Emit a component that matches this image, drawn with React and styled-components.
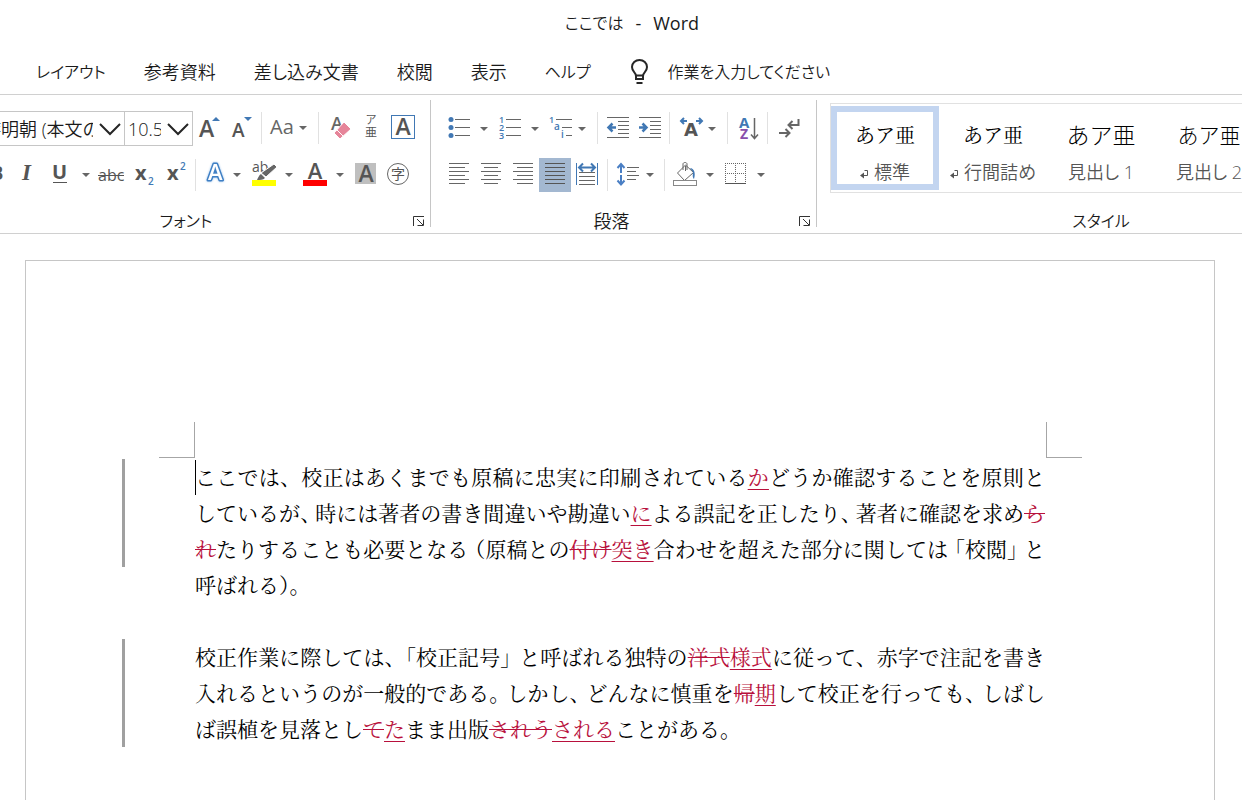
import React from "react";
import styled, { createGlobalStyle, css } from "styled-components";

const BLUE = "#4178b4";
const GREY = "#666";
const DARK = "#555";
const UI = '"Open Sans", "Noto Sans CJK JP", sans-serif';
const MINCHO = '"Noto Serif CJK JP", "Noto Serif JP", "Noto Sans CJK JP", serif';

const GlobalStyle = createGlobalStyle`
  *, *::before, *::after { box-sizing: border-box; }
  body { margin: 0; background: #fff; }
  button { padding: 0; border: 0; background: none; font: inherit; color: inherit; }
`;

const Shell = styled.div`
  display: flex;
  flex-direction: column;
  height: 100vh;
  overflow: hidden;
  background: #fff;
  color: #1a1a1a;
  font: 350 18px/24px ${UI};
  font-feature-settings: "palt" 1;
`;

const kana = css`
  font-size: ${(p) => (p.$kana ? 16 : 18)}px;
`;

const TitleBar = styled.header`
  display: flex;
  flex: none;
  justify-content: center;
  align-items: center;
  gap: 12px;
  height: 46px;
  padding-left: 22px;
`;

const TitlePart = styled.span`
  ${kana}
  font-weight: ${(p) => (p.$kana ? 350 : 400)};
`;

const TabBar = styled.nav`
  display: flex;
  flex: none;
  align-items: center;
  gap: 38px;
  height: 49px;
  padding: 4px 0 0 36px;
  border-bottom: 1px solid #d0d0d0;
`;

const Tab = styled.button`
  ${kana}
  white-space: nowrap;
`;

const TellMe = styled.button`
  ${kana}
  display: flex;
  align-items: center;
  gap: 19px;
  white-space: nowrap;
`;

const Ribbon = styled.section`
  display: flex;
  flex: none;
  height: 139px;
  overflow: hidden;
  border-bottom: 1px solid #d0d0d0;
`;

const Group = styled.div`
  display: flex;
  flex: none;
  flex-direction: column;
  width: ${(p) => p.$width}px;
  margin-left: ${(p) => p.$shift || 0}px;
  padding-top: ${(p) => p.$top || 16}px;
`;

const Divider = styled.div`
  flex: none;
  width: 1px;
  margin: 5px 0 6px;
  background: #c6c6c6;
`;

const Row = styled.div`
  display: flex;
  height: 34px;
  margin-bottom: 13px;
  padding-left: ${(p) => p.$pad || 12}px;
`;

const GroupFoot = styled.div`
  display: flex;
  align-items: center;
  height: 22px;
  margin-top: ${(p) => p.$gap || 5}px;
`;

const GroupName = styled.span`
  ${kana}
  flex: 1;
  text-align: center;
`;

const Launcher = styled.button`
  display: flex;
  width: 24px;
  height: 22px;
  align-items: center;
  padding-left: 6px;
`;

const Tool = styled.button`
  display: flex;
  flex: none;
  width: ${(p) => p.$w || 32}px;
  height: 34px;
  background: ${(p) => (p.$on ? "#a3b8d1" : "transparent")};
`;

const Sep = styled.span`
  flex: none;
  width: 1px;
  height: 32px;
  margin: 1px 3px 0 4px;
  background: #e1e1e1;
`;

const Combo = styled.label`
  position: relative;
  display: flex;
  flex: none;
  width: ${(p) => p.$w}px;
  height: 35px;
  margin-right: ${(p) => p.$join || 0}px;
  border: 1px solid #c6c6c6;

  select {
    width: 100%;
    height: 33px;
    padding: 0 31px 0 3px;
    border: 0;
    appearance: none;
    background: transparent;
    color: #1a1a1a;
    font: 350 18px/24px ${UI};
  }

  svg {
    position: absolute;
    top: 10px;
    right: 3px;
    pointer-events: none;
  }
`;

const Gallery = styled.div`
  display: flex;
  height: 90px;
  margin-left: 13px;
  padding: 2px 0;
  border: 1px solid #e1e1e1;
`;

const StyleCard = styled.button`
  display: flex;
  flex: none;
  flex-direction: column;
  align-items: center;
  width: 108px;
  height: 84px;
  padding-top: 10px;
  border: 6px solid ${(p) => (p.$on ? "#c3d5f0" : "transparent")};
`;

const Sample = styled.span`
  height: 26px;
  color: #000;
  font-family: ${(p) => (p.$head ? UI : MINCHO)};
  font-size: ${(p) => p.$size}px;
  line-height: 26px;
  font-weight: ${(p) => (p.$head ? 300 : 400)};
  font-feature-settings: normal;
  white-space: nowrap;
`;

const StyleName = styled.span`
  display: flex;
  align-items: center;
  gap: 6px;
  margin-top: 12px;
  color: ${DARK};
  white-space: nowrap;
`;

const Page = styled.main`
  flex: 1 0 auto;
  margin: 26px 27px 0 25px;
  padding-top: 161px;
  border: 1px solid #c6c6c6;
  border-bottom: 0;
`;

const Corners = styled.div`
  display: flex;
  justify-content: space-between;
  margin-bottom: 1px;
  padding: 0 132px 0 133px;
`;

const Corner = styled.span`
  width: 36px;
  height: 36px;
  border: 0 solid #a6a6a6;
  border-bottom-width: 1px;
  ${(p) => (p.$right ? css`border-left-width: 1px;` : css`border-right-width: 1px;`)}
`;

const Revised = styled.div`
  display: flex;
  gap: 70px;
  margin-bottom: 36px;
  padding: 0 169px 0 96px;
`;

const ChangeBar = styled.span`
  flex: none;
  width: 3px;
  height: 108px;
  background: #a0a0a0;
`;

const Paragraph = styled.p`
  position: relative;
  flex: 1;
  margin: -1px 0 1px;
  color: #000;
  font: 400 21px/36px ${MINCHO};
  font-feature-settings: normal;
  text-align: justify;
`;

const Caret = styled.span`
  position: absolute;
  left: 0;
  top: 2px;
  width: 1px;
  height: 35px;
  background: #000;
`;

const Ins = styled.ins`
  color: #b8103c;
  text-decoration: underline 1px;
  text-underline-offset: 4px;
`;

const Del = styled.del`
  color: #b8103c;
  text-decoration: line-through 1px;
`;

const Close = styled.span`
  margin-right: -${(p) => p.$by || 4}px;
`;
const Open = styled.span`
  margin-left: -4px;
`;

const Icon = ({ w = 32, children }) => (
  <svg width={w} height="34" viewBox={`0 0 ${w} 34`} fill="none" aria-hidden="true">
    {children}
  </svg>
);

const Drop = ({ x, y = 17 }) => (
  <path d={`M${x - 4} ${y - 2}h8l-4 4z`} fill={GREY} />
);

const T = ({ x, y, s, c = DARK, b = 600, f = "Open Sans", children, ...rest }) => (
  <text x={x} y={y} fontSize={s} fill={c} fontWeight={b} fontFamily={`"${f}", "Noto Sans CJK JP", sans-serif`} {...rest}>
    {children}
  </text>
);

const GlowText = styled.text`
  fill: #fff;
  stroke: #3f7fc4;
  stroke-width: 3px;
  stroke-linejoin: round;
  paint-order: stroke;
  font: 600 22px "Open Sans", sans-serif;
  filter: drop-shadow(0 0 1px #9cc4ec);
`;

const Lines = ({ rows, stroke = GREY }) => (
  <path d={rows.map(([x1, x2, y]) => `M${x1} ${y}H${x2}`).join("")} stroke={stroke} />
);

const Chevron = () => (
  <svg width="22" height="14" viewBox="0 0 22 14" fill="none" aria-hidden="true">
    <path d="M1 2l10 10L21 2" stroke="#262626" strokeWidth="2" />
  </svg>
);

const Bulb = () => (
  <svg width="20" height="26" viewBox="0 0 20 26" fill="none" stroke="#262626" strokeWidth="2" aria-hidden="true">
    <path d="M7 17c0-4-4-4-4-9a7.500 7 0 0 1 15 0c0 5-4 5-4 9M7 16.500h7M7 16v4h7v-4M7.500 24h6" />
  </svg>
);

const LaunchIcon = () => (
  <svg width="13" height="12" viewBox="0 0 13 12" fill="none" stroke="#333" aria-hidden="true">
    <path d="M1.500 11V1.500H12M5 4l6 6M11.500 4.500v6H5.500" />
  </svg>
);

const rowsY = [5.5, 9.5, 13.5, 17.5, 21.5, 25.5];
const alignRows = (a, b) => rowsY.map((y, i) => (i % 2 ? [...b, y] : [...a, y]));

const IndentLines = () => (
  <Lines rows={[[6, 28, 6.5], [17, 28, 10.5], [17, 28, 14.5], [17, 28, 18.5], [17, 28, 22.5], [6, 28, 26.5]]} />
);

function FontGroup() {
  return (
    <Group $width={464} $shift={-34}>
      <Row $pad={13}>
        <Combo $w={146} $join={-1}>
          <select aria-label="フォント名" defaultValue="a">
            <option value="a">游明朝 (本文のフォント)</option>
          </select>
          <Chevron />
        </Combo>
        <Combo $w={69}>
          <select aria-label="フォント サイズ" defaultValue="a">
            <option value="a">10.5</option>
          </select>
          <Chevron />
        </Combo>
        <Tool aria-label="フォント サイズの拡大">
          <Icon><T x="6" y="26" s="23">A</T><path d="M19 10h8l-4-4z" fill={BLUE} /></Icon>
        </Tool>
        <Tool aria-label="フォント サイズの縮小">
          <Icon><T x="7" y="26" s="19">A</T><path d="M19 6h8l-4 4z" fill={BLUE} /></Icon>
        </Tool>
        <Sep />
        <Tool $w={49} aria-label="文字種の変換">
          <Icon w={49}><T x="5" y="23" s="20" c={GREY} b="500">Aa</T><Drop x={38} /></Icon>
        </Tool>
        <Sep />
        <Tool aria-label="書式のクリア">
          <Icon>
            <T x="9" y="19" s="18" c={GREY}>A</T>
            <path d="M22 11l7 7-11 10-6-6z" fill="#e6859a" stroke="#fff" />
            <path d="M15 19l6 6" stroke="#fff" />
          </Icon>
        </Tool>
        <Tool aria-label="ルビ">
          <Icon><T x="12" y="13" s="11" b="400">ア</T><T x="11" y="26" s="12" b="400">亜</T></Icon>
        </Tool>
        <Tool aria-label="囲み線">
          <Icon><rect x="5.500" y="4.500" width="23" height="23" stroke={BLUE} /><T x="17" y="24" s="23" textAnchor="middle">A</T></Icon>
        </Tool>
      </Row>
      <Row $pad={13}>
        <Tool aria-label="太字"><Icon><T x="11" y="22" s="20" b="700">B</T></Icon></Tool>
        <Tool aria-label="斜体">
          <Icon><T x="11" y="22" s="23" b="700" f="Liberation Serif" fontStyle="italic">I</T></Icon>
        </Tool>
        <Tool $w={52} aria-label="下線">
          <Icon w={52}><T x="9" y="21" s="20" b="700">U</T><Lines rows={[[10, 24, 24.5]]} stroke={DARK} /><Drop x={43} /></Icon>
        </Tool>
        <Tool aria-label="取り消し線">
          <Icon><T x="3" y="23" s="16" b="400">abc</T><Lines rows={[[3, 29, 17.5]]} stroke={DARK} /></Icon>
        </Tool>
        <Tool aria-label="下付き">
          <Icon><T x="8" y="22" s="20" b="700">x</T><T x="21" y="27" s="10" c={BLUE}>2</T></Icon>
        </Tool>
        <Tool aria-label="上付き">
          <Icon><T x="8" y="22" s="20" b="700">x</T><T x="21" y="12" s="10" c={BLUE}>2</T></Icon>
        </Tool>
        <Sep />
        <Tool $w={48} aria-label="文字の効果と体裁">
          <Icon w={48}>
            <GlowText x="9" y="22">A</GlowText>
            <Drop x={38} />
          </Icon>
        </Tool>
        <Tool $w={52} aria-label="蛍光ペンの色">
          <Icon w={52}>
            <T x="5" y="14" s="14" b="500">ab</T>
            <path d="M27 6l3 3-11 10-5-4z" fill={GREY} stroke="#fff" />
            <path d="M14 16l4 4c-2 2-5 2-8 2 1-2 2-5 4-6z" fill={GREY} />
            <path d="M5 22h24v6H5z" fill="#ff0" />
            <Drop x={42} />
          </Icon>
        </Tool>
        <Tool $w={52} aria-label="フォントの色">
          <Icon w={52}><T x="16" y="21" s="22" textAnchor="middle">A</T><path d="M4 22h24v6H4z" fill="#f00" /><Drop x={41} /></Icon>
        </Tool>
        <Tool aria-label="文字の網かけ">
          <Icon><path d="M4 5h21v21H4z" fill="#bfbfbf" /><T x="15" y="24" s="23" textAnchor="middle">A</T></Icon>
        </Tool>
        <Tool aria-label="囲い文字">
          <Icon><circle cx="15" cy="16" r="10.500" stroke={GREY} /><T x="15" y="21" s="14" b="400" textAnchor="middle">字</T></Icon>
        </Tool>
      </Row>
      <GroupFoot>
        <GroupName $kana>フォント</GroupName>
        <Launcher aria-label="フォントの設定"><LaunchIcon /></Launcher>
      </GroupFoot>
    </Group>
  );
}

function ParagraphGroup() {
  return (
    <Group $width={385}>
      <Row>
        <Tool $w={52} aria-label="箇条書き">
          <Icon w={52}>
            {[8.5, 16.5, 24.5].map((y) => <circle key={y} cx="8" cy={y} r="2.500" fill={BLUE} />)}
            <Lines rows={[[12, 27, 8.5], [12, 27, 16.5], [12, 27, 24.5]]} />
            <Drop x={41} y={18} />
          </Icon>
        </Tool>
        <Tool $w={52} aria-label="段落番号">
          <Icon w={52}>
            {["1", "2", "3"].map((n, i) => <T key={n} x="4" y={12 + i * 8} s="9" c={BLUE}>{n}</T>)}
            <Lines rows={[[11, 26, 8.5], [11, 26, 16.5], [11, 26, 24.5]]} />
            <Drop x={40} y={18} />
          </Icon>
        </Tool>
        <Tool $w={46} aria-label="アウトライン">
          <Icon w={46}>
            <T x="2" y="12" s="9" c={BLUE}>1</T><T x="7" y="19" s="10" c={BLUE}>a</T><T x="14" y="27" s="10" c={BLUE}>i</T>
            <Lines rows={[[9, 25, 8.5], [15, 25, 16.5], [19, 25, 24.5]]} />
            <Drop x={35} y={18} />
          </Icon>
        </Tool>
        <Sep />
        <Tool aria-label="インデントを減らす">
          <Icon><IndentLines /><path d="M15 16.500H8M11.500 12.500l-4 4 4 4" stroke={BLUE} strokeWidth="2.500" /></Icon>
        </Tool>
        <Tool aria-label="インデントを増やす">
          <Icon><IndentLines /><path d="M6 16.500h7M9.500 12.500l4 4-4 4" stroke={BLUE} strokeWidth="2.500" /></Icon>
        </Tool>
        <Sep />
        <Tool $w={50} aria-label="拡張書式">
          <Icon w={50}>
            <T x="18" y="25" s="18" b="700" f="DejaVu Sans" textAnchor="middle">A</T>
            <path d="M14 10H8M11 7l-3 3 3 3M23 10h6M26 7l3 3-3 3" stroke={BLUE} strokeWidth="2" />
            <Drop x={39} y={18} />
          </Icon>
        </Tool>
        <Sep />
        <Tool aria-label="並べ替え">
          <Icon>
            <T x="8" y="17" s="15" c={BLUE} b="700">A</T><T x="9" y="28" s="14" c="#8a50ac" b="700">Z</T>
            <path d="M23.500 7v20M20 23.500l3.500 4 3.500-4" stroke={GREY} strokeWidth="1.500" />
          </Icon>
        </Tool>
        <Sep />
        <Tool aria-label="編集記号の表示">
          <Icon>
            <path d="M27.500 8v6H18M21.500 10l-4 4 4 4M8 22h10M14.500 18l4 4-4 4" stroke={GREY} strokeWidth="2" />
          </Icon>
        </Tool>
      </Row>
      <Row>
        <Tool aria-label="左揃え"><Icon><Lines rows={alignRows([6, 26], [6, 22])} /></Icon></Tool>
        <Tool aria-label="中央揃え"><Icon><Lines rows={alignRows([6, 26], [9, 23])} /></Icon></Tool>
        <Tool aria-label="右揃え"><Icon><Lines rows={alignRows([6, 26], [10, 26])} /></Icon></Tool>
        <Tool $on aria-label="両端揃え" aria-pressed="true">
          <Icon><Lines rows={alignRows([6, 26], [6, 26])} stroke="#555" /></Icon>
        </Tool>
        <Tool aria-label="均等割り付け">
          <Icon>
            <path d="M5.500 5v22M26.500 5v22" stroke={BLUE} />
            <path d="M9 9.500h14M12 5.500l-4 4 4 4M20 5.500l4 4-4 4" stroke={BLUE} strokeWidth="2" />
            <Lines rows={[[8, 24, 14.5], [8, 24, 18.5], [8, 24, 22.5], [8, 24, 26.5]]} />
          </Icon>
        </Tool>
        <Sep />
        <Tool $w={49} aria-label="行と段落の間隔">
          <Icon w={49}>
            <path d="M10 6v9M6.500 10l3.500-4 3.500 4M10 17v9M6.500 22.500l3.500 4 3.500-4" stroke="#4a7fc4" strokeWidth="2" />
            <Lines rows={[[16, 28, 9.5], [16, 25, 13.5], [16, 28, 17.5], [16, 25, 21.5]]} />
            <Drop x={39} />
          </Icon>
        </Tool>
        <Sep />
        <Tool $w={52} aria-label="塗りつぶし">
          <Icon w={52}>
            <path d="M17.500 7l8 7.500-9 8L9.500 15z" stroke={GREY} />
            <path d="M15 12V6c0-2 4-2 4 0v6M17.500 8v5" stroke={GREY} />
            <path d="M22 10c4 0 6 5 4 11-2-2-1-5-1-7z" fill={BLUE} />
            <rect x="5.500" y="22.500" width="23" height="5" fill="#fff" stroke="#888" />
            <Drop x={42} />
          </Icon>
        </Tool>
        <Tool $w={52} aria-label="罫線">
          <Icon w={52}>
            <path d="M5 5.500h21M5 15.500h21M5.500 5v20M15.500 5v20M25.500 5v20" stroke={GREY} strokeDasharray="1 1" />
            <Lines rows={[[5, 26, 25.5]]} stroke={DARK} />
            <Drop x={41} />
          </Icon>
        </Tool>
      </Row>
      <GroupFoot>
        <GroupName>段落</GroupName>
        <Launcher aria-label="段落の設定"><LaunchIcon /></Launcher>
      </GroupFoot>
    </Group>
  );
}

const ReturnMark = () => (
  <svg width="8" height="14" viewBox="0 0 8 14" fill="none" stroke={DARK} aria-hidden="true">
    <path d="M4.500 5.500h3v5H1.500" />
    <path d="M4 7.500v6L0 10.500z" fill={DARK} stroke="none" />
  </svg>
);

const STYLES = [
  { name: "標準", size: 20, mark: true, on: true },
  { name: "行間詰め", size: 20, mark: true },
  { name: "見出し 1", size: 23, head: true },
  { name: "見出し 2", size: 21, head: true },
];

function StyleGroup() {
  return (
    <Group $width={568} $top={8}>
      <Gallery>
        {STYLES.map((s) => (
          <StyleCard key={s.name} $on={s.on}>
            <Sample $size={s.size} $head={s.head}>あア亜</Sample>
            <StyleName>{s.mark && <ReturnMark />}{s.name}</StyleName>
          </StyleCard>
        ))}
      </Gallery>
      <GroupFoot $gap={17}><GroupName $kana>スタイル</GroupName></GroupFoot>
    </Group>
  );
}

const TABS = [
  { name: "レイアウト", kana: true },
  { name: "参考資料" },
  { name: "差し込み文書" },
  { name: "校閲" },
  { name: "表示" },
  { name: "ヘルプ", kana: true },
];

export default function App() {
  return (
    <Shell lang="ja">
      <GlobalStyle />
      <TitleBar>
        <TitlePart $kana>ここでは</TitlePart>
        <TitlePart>-</TitlePart>
        <TitlePart>Word</TitlePart>
      </TitleBar>
      <TabBar>
        {TABS.map((t) => <Tab key={t.name} $kana={t.kana}>{t.name}</Tab>)}
        <TellMe $kana><Bulb />作業を入力してください</TellMe>
      </TabBar>
      <Ribbon>
        <FontGroup />
        <Divider />
        <ParagraphGroup />
        <Divider />
        <StyleGroup />
      </Ribbon>
      <Page>
        <Corners><Corner /><Corner $right /></Corners>
        <Revised>
          <ChangeBar />
          <Paragraph>
            <Caret />
            ここでは、校正はあくまでも原稿に忠実に印刷されている<Ins>か</Ins>どうか確認することを原則としているが<Close $by={6}>、</Close>時には著者の書き間違いや勘違い<Ins>に</Ins>よる誤記を正したり<Close $by={6}>、</Close>著者に確認を求め<Del>られ</Del>たりすることも必要となる<Open>（</Open>原稿との<Del>付け</Del><Ins>突き</Ins>合わせを超えた部分に関しては<Open>「</Open>校閲<Close>」</Close>と呼ばれる）。
          </Paragraph>
        </Revised>
        <Revised>
          <ChangeBar />
          <Paragraph>
            校正作業に際しては、「校正記号<Close $by={2}>」</Close>と呼ばれる独特の<Del>洋式</Del><Ins>様式</Ins>に従って、赤字で注記を書き入れるというのが一般的である<Close>。</Close>しかし<Close>、</Close>どんなに慎重を<Del>帰</Del><Ins>期</Ins>して校正を行っても<Close>、</Close>しばしば誤植を見落とし<Del>て</Del><Ins>た</Ins>まま出版<Del>されう</Del><Ins>される</Ins>ことがある。
          </Paragraph>
        </Revised>
      </Page>
    </Shell>
  );
}
